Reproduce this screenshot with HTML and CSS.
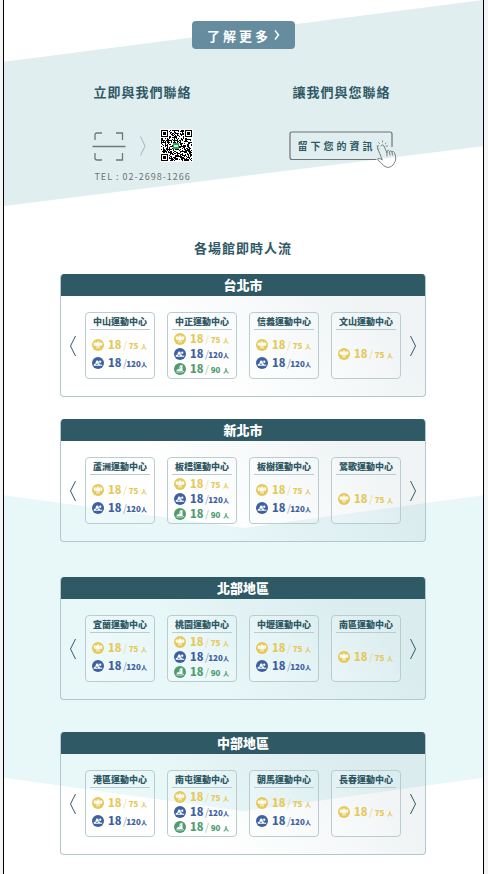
FILE: index.html
```html
<!DOCTYPE html>
<html lang="zh-Hant">
<head>
<meta charset="utf-8">
<meta name="viewport" content="width=device-width, initial-scale=1">
<title>運動中心</title>
<link rel="stylesheet" href="styles.css">
</head>
<body>
<svg class="sprite" aria-hidden="true">
  <symbol id="icon-gym" viewBox="0 0 24 24">
    <circle cx="12" cy="12" r="12" fill="currentColor"/>
    <path d="M3 9.500 5.500 6.500l3 .500 3.500 1.500 3.500-1.500 3-.500L21 9.500l-1 3.500-3 1-2-1.500V19h-2v-5h-2v5H9v-6.500L7 14l-3-1z" fill="#fff"/>
    <circle cx="12" cy="6.500" r="1.800" fill="#fff"/>
    <path d="M7.500 8.500v4M16.500 8.500v4" stroke="currentColor" stroke-width=".8"/>
  </symbol>
  <symbol id="icon-swim" viewBox="0 0 24 24">
    <circle cx="12" cy="12" r="12" fill="currentColor"/>
    <circle cx="16.500" cy="9.500" r="2.300" fill="#fff"/>
    <path d="M6 13.500l3-6.500 4 .500v2.500l2.500 3.500z" fill="#fff"/>
    <path d="M3.500 14.500q2-2 4.200 0t4.200 0 4.200 0 4.200 0v3H3.500z" fill="#fff"/>
  </symbol>
  <symbol id="icon-skate" viewBox="0 0 24 24">
    <circle cx="12" cy="12" r="12" fill="currentColor"/>
    <path d="M12 5l5-1v10l1 2H5l1-2.500 4-2z" fill="#fff"/>
    <path d="M4.500 18h13q1.500 0 2-2" fill="none" stroke="#fff" stroke-width="1.500"/>
    <path d="M10 13.500l4-6" stroke="currentColor" stroke-width="1"/>
  </symbol>
  <symbol id="icon-prev" viewBox="0 0 8 22">
    <path d="M6.500 1 1.500 11l5 10" fill="none" stroke="currentColor"/>
  </symbol>
  <symbol id="icon-next" viewBox="0 0 8 22">
    <path d="M1.500 1l5 10-5 10" fill="none" stroke="currentColor"/>
  </symbol>
</svg>

<main class="page">
  <section class="contact">
    <button class="more" type="button">
      <span>了解更多</span>
      <svg class="more-arrow" viewBox="0 0 6 10" aria-hidden="true"><path d="M1 .500l3.500 4.500L1 9.500" fill="none" stroke="currentColor" stroke-width="1.500"/></svg>
    </button>
    <div class="contact-columns">
      <div class="contact-column">
        <h2 class="heading">立即與我們聯絡</h2>
        <div class="scan">
          <svg class="scan-frame" viewBox="0 0 34 30" aria-hidden="true">
            <g fill="none" stroke="#6f7777" stroke-width="1.300">
              <path d="M3 9V4q0-2 2-2h5M24 2h6.500v7M3 22v5q0 2 2 2h5M24 29h6.500v-7"/>
              <path d="M.500 15.500h33"/>
            </g>
          </svg>
          <svg class="scan-arrow" viewBox="0 0 6 20" aria-hidden="true"><path d="M.500.500l4.500 9.500-4.500 9.500" fill="none" stroke="#9fb8ba"/></svg>
          <svg class="qr" viewBox="0 0 33 33" role="img" aria-label="QR code" shape-rendering="crispEdges">
            <rect width="33" height="33" fill="#fff"/>
            <path id="qr-modules" fill="#000"/>
            <rect x="13" y="14" width="6" height="6" fill="#0fb94a"/>
            <rect x="14" y="16" width="4" height="2" fill="#fff"/>
          </svg>
        </div>
        <p class="tel">TEL : 02-2698-1266</p>
      </div>
      <div class="contact-column">
        <h2 class="heading">讓我們與您聯絡</h2>
        <div class="scan">
          <button class="leave-info" type="button">
            <span>留下您的資訊</span>
            <svg class="leave-info-frame" viewBox="0 0 110 38" aria-hidden="true">
              <g fill="none" stroke="#6f7373" stroke-linecap="round" stroke-linejoin="round">
                <path d="M87 28.500H3Q1 28.500 1 26.500V3Q1 1 3 1H101Q103 1 103 3V15.500" stroke-width="1.200"/>
                <path d="M92 14.500q2-1.500 3 .500l3 7v-2q1.500-1.500 2.500.500 1.500-1.500 2.500.300 1.500-1 2.300.700 1.700 4 1.500 6.500-.500 3-2 4.500-1 3.500-6.500 4-3.500-1-6-4.500l-3.500-3q-.500-2.500 2-1.500l2.500 1.500-4.800-12q-.200-1.500.500-2M98 22v3M100.500 21l.500 3M103 21.300l.500 2.700" stroke-width=".9"/>
                <path d="M88 15h1.500M89.500 11.500l1 1M93.500 10v1M97 12l-.800.800M98.500 15h-1.500M89 18.500l.8-.8" stroke-width=".8"/>
              </g>
            </svg>
          </button>
        </div>
      </div>
    </div>
  </section>

  <section class="crowd">
    <h2 class="heading">各場館即時人流</h2>
    <div class="regions" id="regions"></div>
  </section>
</main>
<script src="script.js"></script>
</body>
</html>
```
FILE: styles.css
```css
* {
  box-sizing: border-box;
}

body {
  margin: 0;
  padding: 0 4px 0 3px;
  background: #f4f4f4;
  color: #2f5965;
  font-family: "Noto Sans CJK TC", "Noto Sans", sans-serif;
}

h2, h3, h4, p, ul {
  margin: 0;
  padding: 0;
  font-weight: 900;
}

button {
  padding: 0;
  border: 0;
  background: none;
  color: inherit;
  font-family: inherit;
  font-weight: 700;
  cursor: pointer;
}

svg {
  display: block;
}

.sprite {
  display: none;
}

.page {
  border: solid #000;
  border-width: 0 1px;
  background: #fff;
}

.heading {
  font-size: 13px;
  font-weight: 700;
  line-height: 20px;
  letter-spacing: 1px;
  text-align: center;
}

/* Contact band */

.contact {
  position: relative;
  isolation: isolate;
  display: flex;
  flex-direction: column;
  align-items: center;
  padding: 21px 0 23px;
}

.contact::before {
  content: "";
  position: absolute;
  inset: 0;
  z-index: -1;
  background: #e1eeef;
  clip-path: polygon(0 30%, 100% 0, 100% 71%, 0 100%);
}

.more {
  display: flex;
  align-items: center;
  gap: 3px;
  height: 28px;
  padding: 0 15px;
  border-radius: 4px;
  background: #658d9f;
  color: #fff;
  font-size: 13px;
  letter-spacing: 3px;
}

.more-arrow {
  width: 6px;
  height: 10px;
}

.contact-columns {
  display: grid;
  grid-template-columns: 1fr 1fr;
  width: 83%;
  margin: 33px 3px 0 0;
}

.contact-column {
  display: flex;
  flex-direction: column;
  align-items: center;
}

.scan {
  display: flex;
  align-items: center;
  gap: 14px;
  height: 33px;
  margin-top: 27px;
}

.scan-frame {
  width: 34px;
  height: 30px;
}

.scan-arrow {
  width: 6px;
  height: 20px;
}

.qr {
  width: 33px;
  height: 33px;
}

.tel {
  margin-top: 9px;
  color: #6b7373;
  font-size: 9px;
  font-weight: 400;
  line-height: 12px;
  letter-spacing: 1px;
}

.leave-info {
  position: relative;
  height: 29px;
  padding: 0 18px 0 8px;
  font-size: 10px;
  letter-spacing: 3px;
}

.leave-info-frame {
  position: absolute;
  top: 0;
  left: 0;
  width: 110px;
  height: 38px;
}

/* Live crowd numbers */

.crowd {
  position: relative;
  isolation: isolate;
  padding: 32px 57px 19px 56px;
}

.crowd::before {
  content: "";
  position: absolute;
  inset: 0;
  z-index: -1;
  background: #e8f7f8;
  clip-path: polygon(0 43.3%, 50% 48.2%, 100% 43.3%, 100% 85.6%, 50% 90.6%, 0 85.6%);
}

.regions {
  display: grid;
  gap: 35px;
  margin-top: 16px;
}

.region-group {
  display: grid;
  gap: 32px;
}

.region-group:first-child {
  gap: 22px;
}

.region {
  overflow: hidden;
  border: 1px solid #b3c8cc;
  border-top: 0;
  border-radius: 4px;
  background: linear-gradient(50deg, rgba(48, 96, 116, 0) 35%, rgba(48, 96, 116, 0.07) 80%);
}

.region-title {
  margin: 0 -1px;
  background: #2f5965;
  color: #fff;
  font-size: 13px;
  line-height: 22px;
  text-align: center;
}

.carousel {
  display: grid;
  grid-template-columns: 24px minmax(0, 1fr) 24px;
  align-items: center;
  padding: 16px 0 17px;
}

.carousel-button {
  display: grid;
  place-items: center;
  height: 40px;
}

.carousel-button svg {
  width: 8px;
  height: 22px;
}

.centers {
  display: grid;
  grid-template-columns: repeat(4, minmax(0, 1fr));
  gap: 12px;
}

.center {
  display: flex;
  flex-direction: column;
  height: 67px;
  padding: 2px 4px 3px;
  border: 1px solid #b9cdd1;
  border-radius: 4px;
  background: linear-gradient(60deg, rgba(255, 255, 255, 0.3), rgba(255, 255, 255, 0));
}

.center-name {
  border-bottom: 1px solid #b9cdd1;
  font-size: 9px;
  line-height: 14px;
  text-align: center;
  white-space: nowrap;
}

.counts {
  display: flex;
  flex: 1;
  flex-direction: column;
  justify-content: center;
  gap: 6px;
  list-style: none;
}

.counts-full {
  gap: 3px;
}

.count {
  display: grid;
  grid-template-columns: 12px 19px 3px minmax(0, 1fr) 6px;
  align-items: baseline;
  height: 12px;
  padding: 0 3px 0 2px;
  line-height: 12px;
}

.count svg {
  align-self: center;
  width: 12px;
  height: 12px;
}

.count-gym {
  color: #e5c95b;
}

.count-swim {
  color: #3d60a0;
}

.count-skate {
  color: #4f9c70;
}

.count-now {
  padding-left: 4px;
  font-size: 11px;
}

.count-slash {
  font-size: 10px;
  font-weight: 400;
  opacity: 0.6;
}

.count-limit {
  font-size: 8px;
  text-align: center;
}

.count-unit {
  font-size: 6px;
}
```
FILE: script.js
```js
const LIMITS = { gym: 75, swim: 120, skate: 90 };

const CENTER_KINDS = [
  ["gym", "swim"],
  ["gym", "swim", "skate"],
  ["gym", "swim"],
  ["gym"]
];

const REGION_GROUPS = [
  [
    { name: "台北市", centers: ["中山", "中正", "信義", "文山"] },
    { name: "新北市", centers: ["蘆洲", "板橋", "板樹", "鶯歌"] }
  ],
  [
    { name: "北部地區", centers: ["宜蘭", "桃園", "中壢", "南區"] },
    { name: "中部地區", centers: ["港區", "南屯", "朝馬", "長春"] }
  ]
];

function countRow(kind) {
  return `<li class="count count-${kind}">
    <svg aria-hidden="true"><use href="#icon-${kind}"/></svg>
    <span class="count-now">18</span>
    <span class="count-slash">/</span>
    <span class="count-limit">${LIMITS[kind]}</span>
    <span class="count-unit">人</span>
  </li>`;
}

function centerCard(name, index) {
  const kinds = CENTER_KINDS[index];
  const full = kinds.length > 2 ? " counts-full" : "";
  return `<article class="center">
    <h4 class="center-name">${name}運動中心</h4>
    <ul class="counts${full}">${kinds.map(countRow).join("")}</ul>
  </article>`;
}

function regionPanel(region) {
  return `<section class="region">
    <h3 class="region-title">${region.name}</h3>
    <div class="carousel">
      <button class="carousel-button" type="button" aria-label="上一頁"><svg><use href="#icon-prev"/></svg></button>
      <div class="centers">${region.centers.map(centerCard).join("")}</div>
      <button class="carousel-button" type="button" aria-label="下一頁"><svg><use href="#icon-next"/></svg></button>
    </div>
  </section>`;
}

document.getElementById("regions").innerHTML = REGION_GROUPS
  .map(group => `<div class="region-group">${group.map(regionPanel).join("")}</div>`)
  .join("");

// QR modules: three finder squares plus a fixed pseudo-random fill.
const SIZE = 31;
function finderModule(x, y) {
  const left = x < 8, right = x >= SIZE - 8, top = y < 8, bottom = y >= SIZE - 8;
  if (!((left && top) || (right && top) || (left && bottom))) return null;
  const fx = left ? x : SIZE - 1 - x;
  const fy = top ? y : SIZE - 1 - y;
  if (fx > 6 || fy > 6) return false;
  const ring = Math.max(Math.abs(fx - 3), Math.abs(fy - 3));
  return ring !== 2;
}
let seed = 2698;
let path = "";
for (let y = 0; y < SIZE; y++) {
  for (let x = 0; x < SIZE; x++) {
    seed = (seed * 1103515245 + 12345) % 2147483648;
    const finder = finderModule(x, y);
    const dark = finder === null ? (seed >> 16) % 100 < 52 : finder;
    if (dark) path += `M${x + 1} ${y + 1}h1v1h-1z`;
  }
}
document.getElementById("qr-modules").setAttribute("d", path);
```
